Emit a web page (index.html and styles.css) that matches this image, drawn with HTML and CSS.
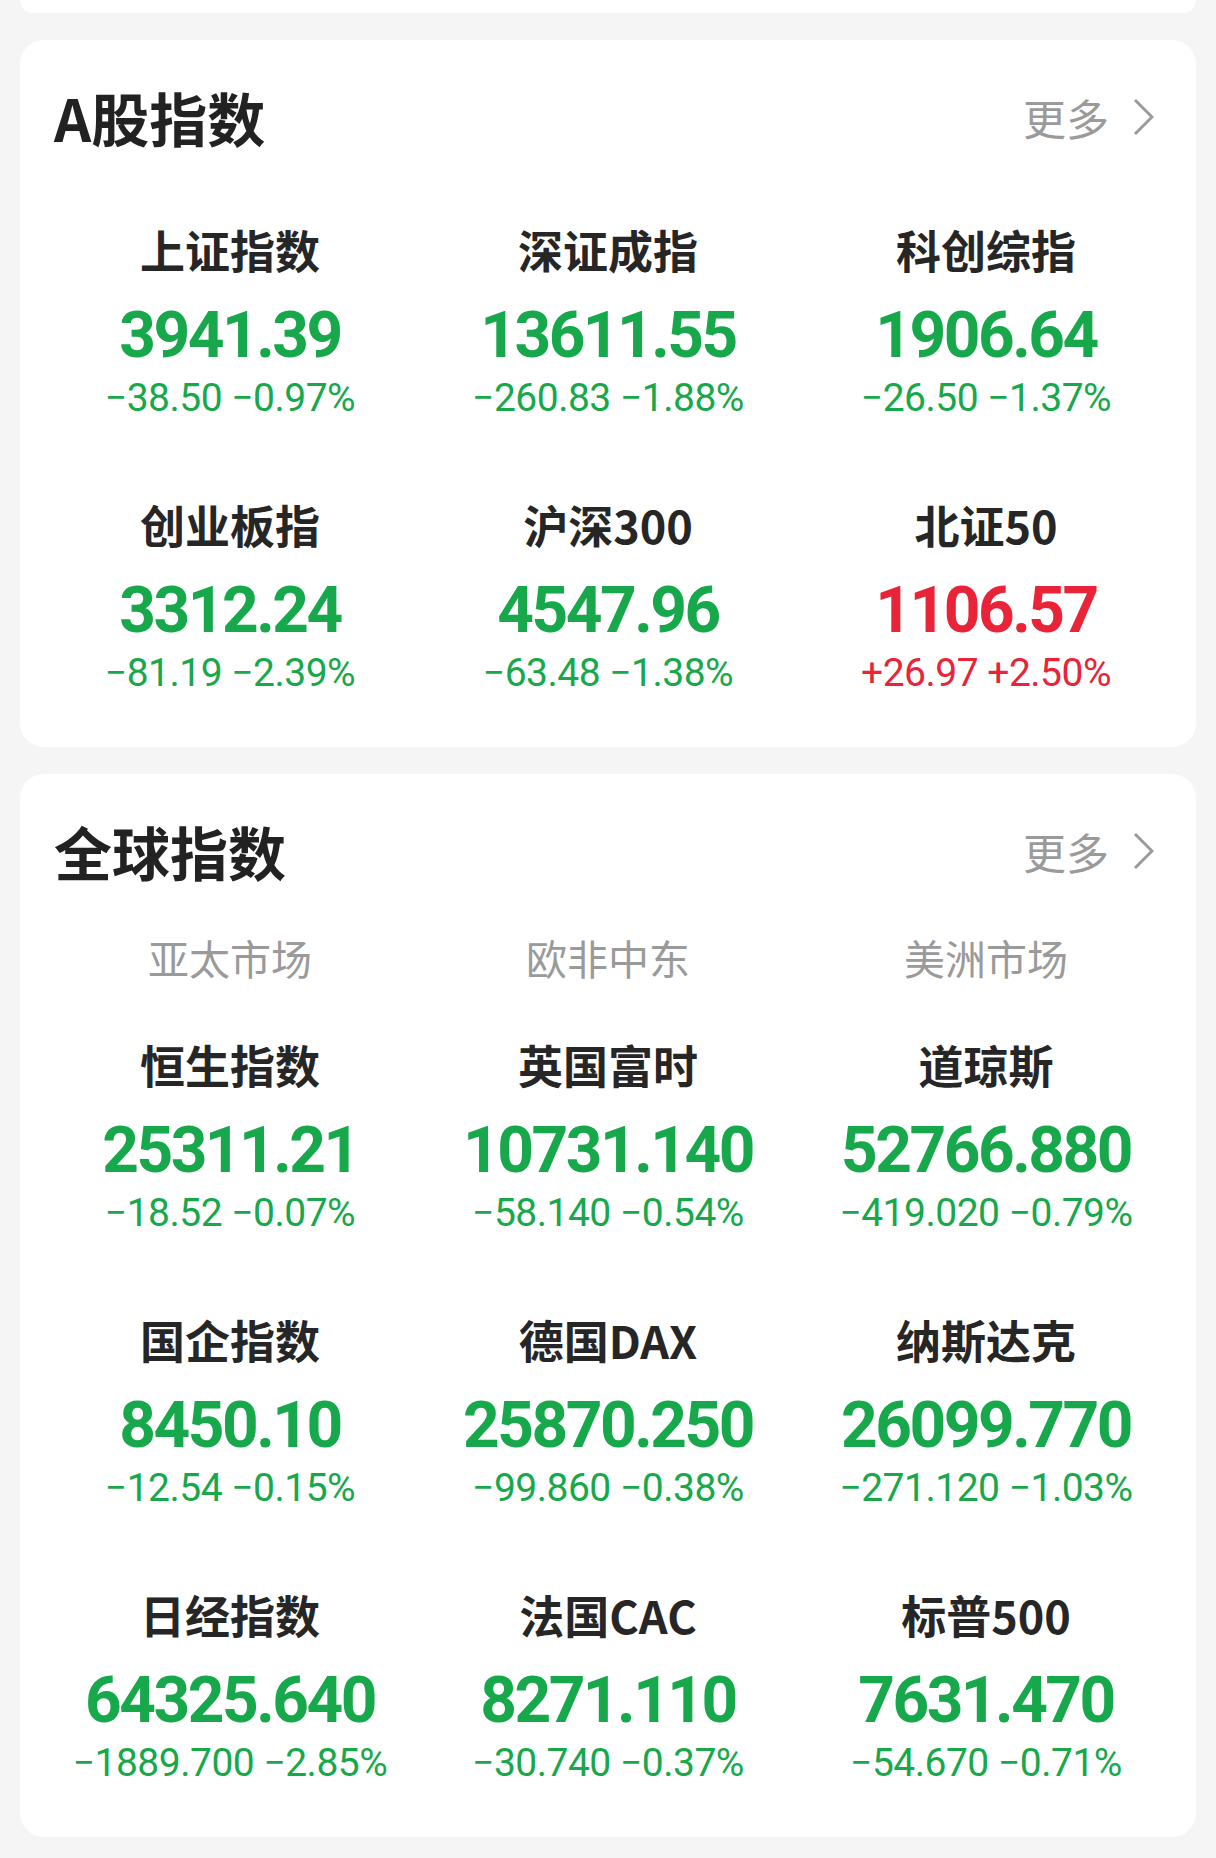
FILE: index.html
```html
<!DOCTYPE html>
<html lang="zh-CN">
  <head>
    <meta charset="UTF-8" />
    <meta name="viewport" content="width=device-width, initial-scale=1.0" />
    <title>指数行情</title>
    <link rel="stylesheet" href="styles.css">
  </head>
  <body>
    <div class="page">
      <div class="card card-stub"></div>

      <div class="card">
        <div class="card-header">
          <h2>A股指数</h2>
          <a class="more" href="#">更多
            <svg width="21" height="38" viewBox="0 0 21 38"><polyline points="2,2 19,19 2,36" /></svg>
          </a>
        </div>
        <div class="index-grid">
          <div class="index-item">
            <div class="name">上证指数</div>
            <div class="value down">3941.39</div>
            <div class="change down">−38.50 −0.97%</div>
          </div>
          <div class="index-item">
            <div class="name">深证成指</div>
            <div class="value down">13611.55</div>
            <div class="change down">−260.83 −1.88%</div>
          </div>
          <div class="index-item">
            <div class="name">科创综指</div>
            <div class="value down">1906.64</div>
            <div class="change down">−26.50 −1.37%</div>
          </div>
          <div class="index-item">
            <div class="name">创业板指</div>
            <div class="value down">3312.24</div>
            <div class="change down">−81.19 −2.39%</div>
          </div>
          <div class="index-item">
            <div class="name">沪深300</div>
            <div class="value down">4547.96</div>
            <div class="change down">−63.48 −1.38%</div>
          </div>
          <div class="index-item">
            <div class="name">北证50</div>
            <div class="value up">1106.57</div>
            <div class="change up">+26.97 +2.50%</div>
          </div>
        </div>
      </div>

      <div class="card">
        <div class="card-header">
          <h2>全球指数</h2>
          <a class="more" href="#">更多
            <svg width="21" height="38" viewBox="0 0 21 38"><polyline points="2,2 19,19 2,36" /></svg>
          </a>
        </div>
        <div class="market-tabs">
          <span>亚太市场</span>
          <span>欧非中东</span>
          <span>美洲市场</span>
        </div>
        <div class="index-grid">
          <div class="index-item">
            <div class="name">恒生指数</div>
            <div class="value down">25311.21</div>
            <div class="change down">−18.52 −0.07%</div>
          </div>
          <div class="index-item">
            <div class="name">英国富时</div>
            <div class="value down">10731.140</div>
            <div class="change down">−58.140 −0.54%</div>
          </div>
          <div class="index-item">
            <div class="name">道琼斯</div>
            <div class="value down">52766.880</div>
            <div class="change down">−419.020 −0.79%</div>
          </div>
          <div class="index-item">
            <div class="name">国企指数</div>
            <div class="value down">8450.10</div>
            <div class="change down">−12.54 −0.15%</div>
          </div>
          <div class="index-item">
            <div class="name">德国DAX</div>
            <div class="value down">25870.250</div>
            <div class="change down">−99.860 −0.38%</div>
          </div>
          <div class="index-item">
            <div class="name">纳斯达克</div>
            <div class="value down">26099.770</div>
            <div class="change down">−271.120 −1.03%</div>
          </div>
          <div class="index-item">
            <div class="name">日经指数</div>
            <div class="value down">64325.640</div>
            <div class="change down">−1889.700 −2.85%</div>
          </div>
          <div class="index-item">
            <div class="name">法国CAC</div>
            <div class="value down">8271.110</div>
            <div class="change down">−30.740 −0.37%</div>
          </div>
          <div class="index-item">
            <div class="name">标普500</div>
            <div class="value down">7631.470</div>
            <div class="change down">−54.670 −0.71%</div>
          </div>
        </div>
      </div>
    </div>
  </body>
</html>
```

FILE: styles.css
```css
body {
  margin: 0;
  background-color: #f5f5f5;
  font-family: "Noto Sans CJK SC", "Noto Sans", sans-serif;
  color: #262626;
}
.page {
  padding: 0 20px 21px;
}
.card {
  background-color: #fff;
  border-radius: 24px;
  margin-top: 27px;
  padding-bottom: 54px;
}
.card-stub {
  margin-top: 0;
  height: 13px;
  padding-bottom: 0;
  border-radius: 0 0 24px 24px;
}
.card-header {
  display: flex;
  align-items: center;
  justify-content: space-between;
  height: 80px;
  padding: 37px 42px 3px 34px;
}
.card-header h2 {
  margin: 0;
  font-size: 58px;
  font-weight: 700;
  line-height: 80px;
  color: #222;
}
.more {
  display: flex;
  align-items: center;
  gap: 24px;
  font-size: 43px;
  line-height: 60px;
  color: #9a9a9a;
  text-decoration: none;
}
.more svg polyline {
  fill: none;
  stroke: #9a9a9a;
  stroke-width: 3;
}
.market-tabs {
  display: grid;
  grid-template-columns: repeat(3, 1fr);
  padding: 0 21px;
  margin-top: 33px;
}
.market-tabs span {
  text-align: center;
  font-size: 41px;
  line-height: 60px;
  color: #9a9a9a;
}
.index-grid {
  display: grid;
  grid-template-columns: repeat(3, 1fr);
  row-gap: 77px;
  padding: 0 21px;
  margin-top: 60px;
}
.market-tabs + .index-grid {
  margin-top: 48px;
}
.index-item {
  text-align: center;
}
.index-item .name {
  font-size: 45px;
  font-weight: 700;
  line-height: 60px;
  color: #262626;
}
.index-item .value {
  margin-top: 16px;
  font-family: Roboto, "Liberation Sans", sans-serif;
  font-size: 64px;
  font-weight: 700;
  line-height: 80px;
  letter-spacing: -2.5px;
}
.index-item .change {
  margin-top: 2px;
  font-family: Roboto, "Liberation Sans", sans-serif;
  font-size: 39px;
  line-height: 40px;
  letter-spacing: -0.5px;
}
.down {
  color: #18a84c;
}
.up {
  color: #e92338;
}
```
